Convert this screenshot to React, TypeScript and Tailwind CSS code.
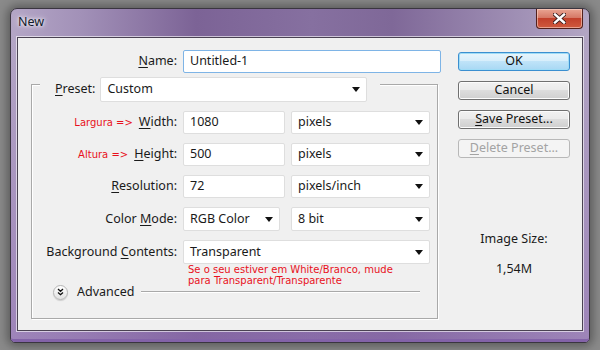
import React from "react";

const F = { fontFamily: "'Noto Sans', 'DejaVu Sans', sans-serif" };
const R = { fontFamily: "'DejaVu Sans', Verdana, sans-serif" };

function Arrow() {
  return (
    <svg width="8" height="5" viewBox="0 0 8 5" className="shrink-0">
      <path d="M0 0 H8 L4 5 Z" fill="#111" />
    </svg>
  );
}

function Select({ text, w, h = 23 }: { text: string; w: string; h?: number }) {
  return (
    <div
      className={`${w} flex items-center justify-between bg-white border border-[#dedede] rounded-[2px] pl-[6px] pr-[6px] text-[12.5px] text-[#1a1a1a]`}
      style={{ height: h }}
    >
      <span>{text}</span>
      <Arrow />
    </div>
  );
}

function Input({ text, w }: { text: string; w: string }) {
  return (
    <div className={`${w} h-[23px] flex items-center bg-white border border-[#dedede] rounded-[2px] pl-[6px] text-[12.5px] text-[#1a1a1a]`}>
      {text}
    </div>
  );
}

function Label({ children, red }: { children: React.ReactNode; red?: string }) {
  return (
    <div className="w-[145px] flex items-center justify-end text-[12.5px] text-[#1a1a1a]">
      {red && (
        <span className="text-[10px] text-[#e8101c] mr-[6px]" style={R}>
          {red}
        </span>
      )}
      {children}
    </div>
  );
}

function Btn({ children, primary, disabled }: { children: React.ReactNode; primary?: boolean; disabled?: boolean }) {
  const cls = primary
    ? "border-[#3b8fd0] bg-[linear-gradient(#e8f5fc_0%,#d7eefb_45%,#bfe3f8_50%,#a8d8f4_100%)] shadow-[inset_0_0_0_1px_#9fdcf6] text-[#111]"
    : disabled
    ? "border-[#b8b8b8] bg-[#f4f4f4] text-[#a3a3a3]"
    : "border-[#707070] bg-[linear-gradient(#f2f2f2_0%,#ebebeb_45%,#dddddd_50%,#cfcfcf_100%)] shadow-[inset_0_0_0_1px_#fcfcfc] text-[#111]";
  return (
    <div className={`w-[112px] h-[19px] border rounded-[3px] flex items-center justify-center text-[12.5px] ${cls}`}>
      {children}
    </div>
  );
}

export default function App() {
  return (
    <div className="w-[600px] h-[350px] bg-[#8a8a8a] overflow-hidden pt-[8px] pl-[10px]" style={F}>
      <div className="w-[580px] h-[335px] rounded-t-[7px] rounded-b-[5px] border border-[#3a3540] flex flex-col shadow-[0_0_10px_3px_rgba(0,0,0,0.35)] bg-[linear-gradient(90deg,#b4a6c6_0%,#a291b8_12%,#7c6396_32%,#8670a0_52%,#7f6898_66%,#a090b5_88%,#b3a6c4_100%)]">
        {/* title bar */}
        <div className="h-[28px] flex items-start justify-between">
          <div className="pl-[7px] pt-[4px] text-[12.5px] text-[#111a2a] [text-shadow:0_0_6px_#fff,0_0_3px_#fff]">New</div>
          <div className="mr-[6px] w-[47px] h-[20px] rounded-b-[4px] border border-t-0 border-[#52201c] bg-[linear-gradient(#e9a593_0%,#d67966_45%,#c2402b_50%,#cf5a3e_100%)] shadow-[inset_0_0_0_1px_rgba(255,220,210,0.55)] flex items-center justify-center">
            <svg width="13" height="11" viewBox="0 0 13 11">
              <path d="M2 1.5 L11 9.5 M11 1.5 L2 9.5" stroke="#3a1c1c" strokeWidth="4.2" strokeLinecap="square" />
              <path d="M2 1.5 L11 9.5 M11 1.5 L2 9.5" stroke="#ffffff" strokeWidth="2.4" strokeLinecap="square" />
            </svg>
          </div>
        </div>
        {/* body */}
        <div className="flex-1 px-[6px] pb-[8px] border-b-[3px] border-b-[#8363a8] rounded-b-[4px] bg-[linear-gradient(180deg,transparent_0%,rgba(140,105,175,0.55)_100%)]">
          <div className="h-full border border-[#4a4252] bg-[#f0f0f0] shadow-[0_0_0_1px_rgba(255,255,255,0.6)] flex">
            {/* left */}
            <div className="w-[423px] flex flex-col">
              <div className="mt-[12px] flex items-center">
                <div className="w-[159px] text-right text-[12.5px] text-[#1a1a1a]">
                  <span className="underline underline-offset-2">N</span>ame:
                </div>
                <div className="ml-[6px] w-[258px] h-[23px] flex items-center bg-white border border-[#7eb4e6] rounded-[2px] pl-[6px] text-[12.5px] text-[#1a1a1a]">
                  Untitled-1
                </div>
              </div>
              {/* group */}
              <div className="mt-[11px] ml-[13px] w-[407px] h-[235px] border border-[#a9a9a9] shadow-[inset_1px_1px_0_#fff,1px_1px_0_#fff] flex flex-col">
                <div className="-mt-[8px] ml-[8px] w-[340px] bg-[#f0f0f0] flex items-center pl-[15px] pr-[12px]">
                  <div className="text-[12.5px] text-[#1a1a1a]">
                    <span className="underline underline-offset-2">P</span>reset:
                  </div>
                  <div className="ml-[5px]">
                    <Select text="Custom" w="w-[267px]" h={25} />
                  </div>
                </div>
                <div className="mt-[9px] flex flex-col gap-[9px]">
                  <div className="flex items-center gap-[6px]">
                    <Label red="Largura =>">
                      <span className="underline underline-offset-2">W</span>idth:
                    </Label>
                    <Input text="1080" w="w-[102px]" />
                    <Select text="pixels" w="w-[139px]" />
                  </div>
                  <div className="flex items-center gap-[6px]">
                    <Label red="Altura =>">
                      <span className="underline underline-offset-2">H</span>eight:
                    </Label>
                    <Input text="500" w="w-[102px]" />
                    <Select text="pixels" w="w-[139px]" />
                  </div>
                  <div className="flex items-center gap-[6px]">
                    <Label>
                      <span className="underline underline-offset-2">R</span>esolution:
                    </Label>
                    <Input text="72" w="w-[102px]" />
                    <Select text="pixels/inch" w="w-[139px]" />
                  </div>
                  <div className="flex items-center gap-[6px]">
                    <Label>
                      Color&nbsp;<span className="underline underline-offset-2">M</span>ode:
                    </Label>
                    <Select text="RGB Color" w="w-[97px]" h={24} />
                    <div className="ml-[5px]">
                      <Select text="8 bit" w="w-[139px]" h={24} />
                    </div>
                  </div>
                  <div className="flex items-center gap-[6px]">
                    <Label>
                      <span>
                        Background&nbsp;<span className="underline underline-offset-2">C</span>ontents:
                      </span>
                    </Label>
                    <Select text="Transparent" w="w-[247px]" h={24} />
                  </div>
                </div>
                <div className="mt-[0px] ml-[156px] text-[10px] leading-[11px] text-[#e8101c]" style={R}>
                  <div>Se o seu estiver em White/Branco, mude</div>
                  <div>para Transparent/Transparente</div>
                </div>
                <div className="-mt-[1px] ml-[21px] mr-[17px] flex items-center h-[14px]">
                  <div className="w-[15px] h-[15px] rounded-full border border-[#b5b5b5] bg-[linear-gradient(#ffffff,#e2e2e2)] flex items-center justify-center shadow-[0_1px_1px_rgba(0,0,0,0.15)]">
                    <svg width="7" height="8" viewBox="0 0 7 8">
                      <path d="M1 1 L3.5 3.3 L6 1 M1 4.4 L3.5 6.7 L6 4.4" stroke="#111" strokeWidth="1.3" fill="none" />
                    </svg>
                  </div>
                  <div className="ml-[9px] text-[12.5px] text-[#1a1a1a]">Advanced</div>
                  <div className="ml-[6px] flex-1 h-[2px] border-t border-[#a9a9a9] border-b border-b-white" />
                </div>
              </div>
            </div>
            {/* right */}
            <div className="ml-[17px] mt-[14px] flex flex-col gap-[10px] items-center">
              <Btn primary>OK</Btn>
              <Btn>Cancel</Btn>
              <Btn>
                <span>
                  <span className="underline underline-offset-2">S</span>ave Preset...
                </span>
              </Btn>
              <Btn disabled>
                <span>
                  <span className="underline underline-offset-2">D</span>elete Preset...
                </span>
              </Btn>
              <div className="mt-[62px] text-[12.5px] text-[#1a1a1a]">Image Size:</div>
              <div className="mt-[1px] text-[12.5px] text-[#1a1a1a]">1,54M</div>
            </div>
          </div>
        </div>
      </div>
    </div>
  );
}
